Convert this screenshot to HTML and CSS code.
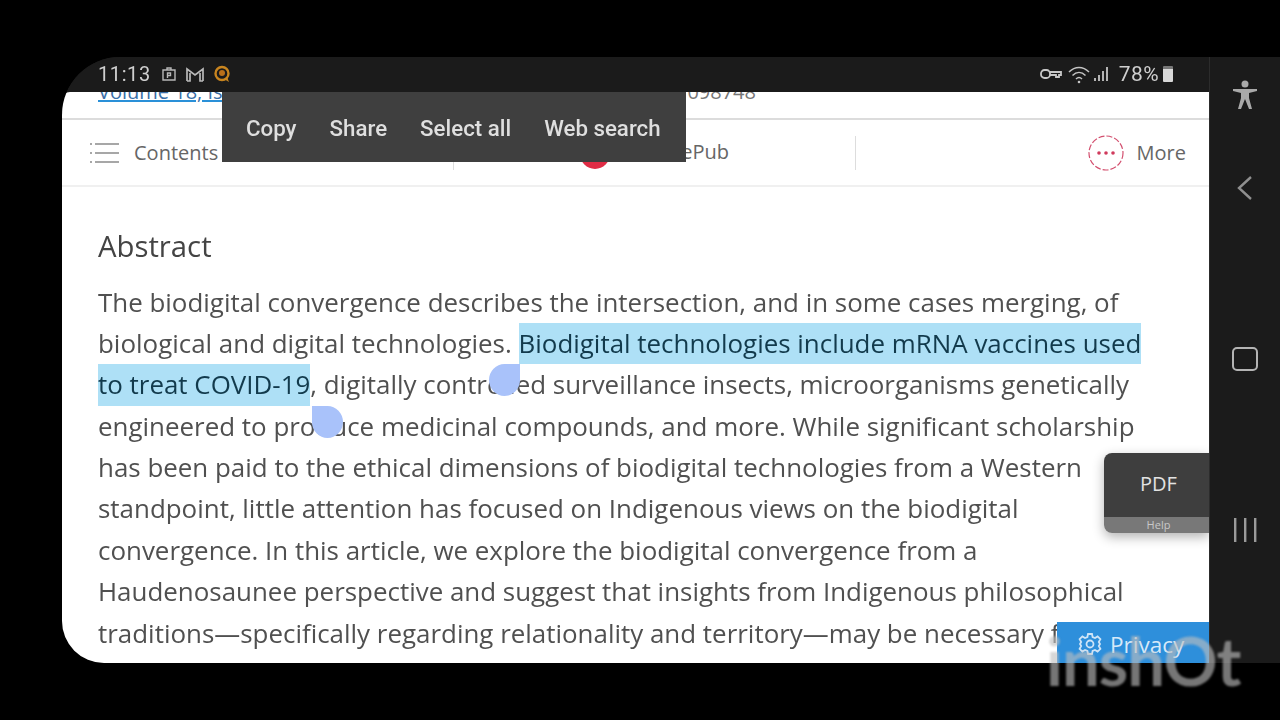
FILE: index.html
```html
<!DOCTYPE html>
<html lang="en">
<head>
<meta charset="utf-8">
<title>Abstract</title>
<link rel="stylesheet" href="styles.css">
</head>
<body>
<div class="device">
  <div class="screen">
    <div class="status">
      <div class="status-left">
        <span class="clock">11:13</span>
        <svg class="ic" width="16" height="16" viewBox="0 0 16 16" fill="none" stroke="#b8b8b8" stroke-width="1.4"><path d="M2 4h12v10H2zM6 4V2h4v2M6.500 12V7h3v2.500h-3"/></svg>
        <svg class="ic" width="20" height="15" viewBox="0 0 20 15" fill="none" stroke="#b8b8b8" stroke-width="1.7"><path d="M2 14V2l8 6 8-6v12M2 14h3V6M18 14h-3V6"/></svg>
        <svg class="ic" width="18" height="18" viewBox="0 0 18 18"><circle cx="9" cy="8.500" r="6.500" fill="none" stroke="#c9851f" stroke-width="2.400"/><circle cx="9" cy="8" r="3" fill="#b96f1a"/><path d="M11 14l5 3-2-5z" fill="#c9851f"/></svg>
      </div>
      <div class="status-right">
        <svg width="22" height="14" viewBox="0 0 22 14" fill="none" stroke="#c8c8c8" stroke-width="1.800"><rect x="1" y="3" width="9" height="8" rx="3.500"/><path d="M10 5h11v3h-2v2h-3V8h-6"/></svg>
        <svg width="24" height="19" viewBox="0 0 24 19" fill="none" stroke="#c4c4c4" stroke-width="1.500"><path d="M2 7c6-6 14-6 20 0M5.500 10.500c4-4 9-4 13 0M9 14c2-2 4-2 6 0"/><circle cx="12" cy="17" r="1.300" fill="#c4c4c4" stroke="none"/></svg>
        <svg class="signal" width="16" height="16" viewBox="0 0 16 16" fill="#b4b4b4"><rect x="0" y="12" width="2" height="3"/><rect x="4" y="9" width="2" height="6"/><rect x="8" y="5" width="2" height="10"/><rect x="12" y="1" width="2" height="14"/></svg>
        <span class="battery-text">78%</span>
        <span class="battery"></span>
      </div>
    </div>

    <div class="page">
      <div class="meta">
        <a class="meta-link">Volume 18, Issue 2</a>
        <span class="meta-doi">098748</span>
      </div>
      <div class="toolbar">
        <div class="tool tool-contents">
          <svg width="30" height="24" viewBox="0 0 30 24" fill="none" stroke="#8a8a8a" stroke-width="1.300"><path d="M6 3h24M6 12h24M6 21h24M1 3h2M1 12h2M1 21h2"/></svg>
          <span>Contents</span>
        </div>
        <div class="tool tool-epub">
          <span class="red-dot"></span>
          <span class="epub-label">ePub</span>
        </div>
        <div class="tool tool-more">
          <svg width="36" height="36" viewBox="0 0 36 36" fill="none"><circle cx="18" cy="18" r="17" stroke="#d3506f" stroke-width="1.200" stroke-dasharray="6 2"/><circle cx="11" cy="18" r="1.800" fill="#d03a5c"/><circle cx="18" cy="18" r="1.800" fill="#d03a5c"/><circle cx="25" cy="18" r="1.800" fill="#d03a5c"/></svg>
          <span>More</span>
        </div>
      </div>

      <article class="article">
        <h2 class="heading">Abstract</h2>
        <div class="abstract">
          <div class="line">The biodigital convergence describes the intersection, and in some cases merging, of</div>
          <div class="line">biological and digital technologies. <span class="sel">Biodigital technologies include mRNA vaccines used</span></div>
          <div class="line"><span class="sel">to treat COVID-19</span>, digitally contr<span class="hdl hdl-start"></span>olled surveillance insects, microorganisms genetically</div>
          <div class="line">engineered to pro<span class="hdl hdl-end"></span>duce medicinal compounds, and more. While significant scholarship</div>
          <div class="line">has been paid to the ethical dimensions of biodigital technologies from a Western</div>
          <div class="line">standpoint, little attention has focused on Indigenous views on the biodigital</div>
          <div class="line">convergence. In this article, we explore the biodigital convergence from a</div>
          <div class="line">Haudenosaunee perspective and suggest that insights from Indigenous philosophical</div>
          <div class="line">traditions—specifically regarding relationality and territory—may be necessary for</div>
        </div>
      </article>

      <div class="popup">
        <span>Copy</span><span>Share</span><span>Select all</span><span>Web search</span>
      </div>
      <div class="pdf">
        <div class="pdf-main">PDF</div>
        <div class="pdf-help">Help</div>
      </div>
      <div class="privacy">
        <svg width="24" height="24" viewBox="0 0 24 24" fill="none" stroke="#cfe4f7" stroke-width="1.800"><circle cx="12" cy="12" r="3.500"/><path d="M10 2h4l.6 3 2.400 1 2.600-1.600 2.800 2.800L20.800 10l1.200 2-1.200 2 1.600 2.800-2.800 2.800L17 18l-2.400 1-.6 3h-4l-.6-3L7 18l-2.600 1.600-2.800-2.800L3.200 14 2 12l1.200-2-1.600-2.800 2.800-2.800L7 6l2.400-1z"/></svg>
        <span>Privacy</span>
      </div>
    </div>
  </div>

  <nav class="navbar">
    <svg class="nav-person" width="26" height="30" viewBox="0 0 26 30" fill="#a9a9a9"><circle cx="13" cy="4" r="3.500"/><path d="M1 9h24v2l-8 2v5l3 11h-3l-4-10-4 10H6l3-11v-5l-8-2z"/></svg>
    <svg class="nav-back" width="18" height="26" viewBox="0 0 18 26" fill="none" stroke="#8f8f8f" stroke-width="2.400"><path d="M15 2L3 13l12 11"/></svg>
    <span class="nav-square"></span>
    <svg class="nav-bars" width="24" height="24" viewBox="0 0 24 24" fill="#9a9a9a"><rect x="1" y="0" width="2.400" height="24"/><rect x="11" y="0" width="2.400" height="24"/><rect x="21" y="0" width="2.400" height="24"/></svg>
  </nav>
</div>
<div class="watermark">inshOt</div>
</body>
</html>
```

FILE: styles.css
```css
* { box-sizing: border-box; }
html, body { margin: 0; height: 720px; overflow: hidden; background: #000; }
body { position: relative; font-family: "Open Sans", sans-serif; }

.device { display: flex; height: 606px; margin: 57px 0 0 62px; }
.screen {
  flex: 0 0 1147px;
  display: flex;
  flex-direction: column;
  background: #1b1b1b;
  border-radius: 58px 0 0 42px;
  overflow: hidden;
}
.status {
  flex: 0 0 35px;
  display: flex;
  justify-content: space-between;
  align-items: center;
  padding: 0 36px 1px 36px;
  background: #1b1b1b;
  color: #cfcfcf;
  filter: blur(.4px);
}
.status-left { display: flex; align-items: center; gap: 8px; }
.clock { font: 20px "Roboto", sans-serif; letter-spacing: .6px; margin-right: 2px; }
.status-right { display: flex; align-items: center; gap: 5px; }
.signal { margin-left: -2px; }
.battery-text { font: 21px "Roboto", sans-serif; letter-spacing: .4px; margin-left: 4px; }
.battery { width: 10px; height: 16px; background: linear-gradient(#777 0 3px, #d8d8d8 3px); border-radius: 1px; margin-left: -1px; }

.page {
  position: relative;
  flex: 1;
  min-height: 0;
  background: #fff;
  overflow: hidden;
  border-radius: 8px 0 0 0;
}
.meta {
  height: 28px;
  display: flex;
  overflow: hidden;
  padding-left: 36px;
  border-bottom: 2px solid #dcdcdc;
  font-size: 20px;
  line-height: 20px;
  color: #555;
}
.meta-link { color: #3a6fa8; text-decoration: underline; text-decoration-color: #2a90d8; margin-top: -10px; white-space: nowrap; }
.meta-doi { margin: -10px 0 0 auto; position: relative; right: 453px; color: #777; }

.toolbar {
  height: 67px;
  display: grid;
  grid-template-columns: 391px 402px 1fr;
  align-items: center;
  border-bottom: 2px solid #f0f0f0;
  color: #666;
  font-size: 20px;
}
.tool { display: flex; align-items: center; height: 34px; }
.tool-contents { gap: 15px; padding-left: 27px; }
.tool-epub { border-left: 1px solid #ddd; position: relative; height: 34px; }
.tool-more { border-left: 1px solid #ddd; justify-content: flex-end; gap: 13px; padding-right: 23px; height: 34px; }
.red-dot { position: absolute; left: 126px; top: 3px; width: 30px; height: 30px; border-radius: 50%; background: #e02c45; }
.epub-label { position: absolute; right: 126px; top: 2px; }

.article { padding: 35px 0 0 36px; filter: blur(.5px); }
.heading { margin: 0 0 11.500px; font-size: 29.3px; line-height: 48px; font-weight: 400; color: #444; }
.abstract { color: #505050; font-size: 25.93px; }
.line { height: 41.4px; line-height: 41.4px; white-space: nowrap; position: relative; }
.sel { display: inline-block; background: #aee0f6; color: #123a4c; }

.hdl { position: absolute; width: 31px; height: 32px; background: #a9c2fa; }
.hdl-start { left: 391px; top: 0; border-radius: 50% 0 50% 50%; }
.hdl-end { left: 214px; top: 0; border-radius: 0 50% 50% 50%; }

.popup {
  position: absolute;
  left: 160px;
  top: 0;
  width: 464px;
  height: 70px;
  display: flex;
  align-items: center;
  gap: 33px;
  padding: 2px 24px 0;
  background: #3f3f3f;
  color: #dfdfdf;
  font: 500 22.3px "Roboto", sans-serif;
  white-space: nowrap;
  filter: blur(.3px);
}
.pdf {
  position: absolute;
  right: 0;
  top: 361px;
  width: 105px;
  height: 80px;
  border-radius: 8px 0 0 8px;
  overflow: hidden;
  box-shadow: 0 4px 12px rgba(0, 0, 0, .3);
  text-align: center;
}
.pdf-main { height: 64px; padding-left: 4px; background: #3e3e3e; color: #e2e2e2; font-size: 20px; line-height: 62px; }
.pdf-help { height: 16px; padding-left: 4px; background: #787878; color: #c8c8c8; font-size: 11px; line-height: 16px; }
.privacy {
  position: absolute;
  right: 0;
  bottom: 0;
  width: 152px;
  height: 41px;
  display: flex;
  align-items: center;
  gap: 8px;
  padding: 3px 0 0 21px;
  background: #2e8fdb;
  color: #d6e9f9;
  font-size: 22.5px;
}

.navbar { position: relative; flex: 0 0 71px; display: flex; flex-direction: column; align-items: center; background: #1b1b1b; border-left: 1px solid #2c2c2c; }
.nav-person { margin-top: 23px; flex: none; }
.nav-back { margin-top: 65px; flex: none; }
.nav-square { margin-top: 146px; width: 26px; height: 24px; border: 2.500px solid #b4b4b4; border-radius: 5px; flex: none; }
.nav-bars { margin-top: 147px; flex: none; }

.watermark {
  position: absolute;
  left: 1046px;
  top: 622px;
  font: 700 67px/76px "Lato", sans-serif;
  color: rgba(190, 190, 190, .62);
  letter-spacing: -1px;
  filter: blur(.8px);
}
```
